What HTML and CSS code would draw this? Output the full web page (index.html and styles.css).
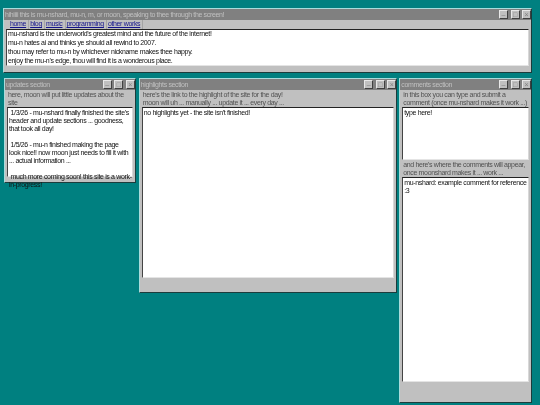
FILE: index.html
```html
<!DOCTYPE html>
<html lang="en">
<head>
    <meta charset="UTF-8">
    <meta name="viewport" content="width=device-width, initial-scale=1.0">
    <title>moon</title>
    <link rel="stylesheet" href="styles.css">
</head>
<body>
    <div class="window top">
        <div class="titlebar">
            <span class="title">hihiiii this is mu-nshard, mu-n, m, or moon, speaking to thee through the screen!</span>
            <div class="controls">
                <span class="ctl">&#8211;</span>
                <span class="ctl">&#9633;</span>
                <span class="ctl">&#215;</span>
            </div>
        </div>
        <div class="nav">
            <a href="#">home</a>
            <a href="#">blog</a>
            <a href="#">music</a>
            <a href="#">programming</a>
            <a href="#">other works</a>
        </div>
        <div class="box intro">
            mu-nshard is the underworld's greatest mind and the future of the internet!<br>
            mu-n hates ai and thinks ye should all rewind to 2007.<br>
            thou may refer to mu-n by whichever nickname makes thee happy.<br>
            enjoy the mu-n's edge, thou will find it is a wonderous place.
        </div>
    </div>

    <div class="row">
        <div class="window updates">
            <div class="titlebar">
                <span class="title">updates section</span>
                <div class="controls">
                    <span class="ctl">&#8211;</span>
                    <span class="ctl">&#9633;</span>
                    <span class="ctl">&#215;</span>
                </div>
            </div>
            <p class="desc">here, moon will put little updates about the site</p>
            <div class="box updates-box">
                <p>1/3/26 - mu-nshard finally finished the site's header and update sections ... goodness, that took all day!</p>
                <p>1/5/26 - mu-n finished making the page<br>look nice!! now moon just needs to fill it with ... actual information ...</p>
                <p>much more coming soon! this site is a work-in-progress!</p>
            </div>
        </div>

        <div class="window highlights">
            <div class="titlebar">
                <span class="title">highlights section</span>
                <div class="controls">
                    <span class="ctl">&#8211;</span>
                    <span class="ctl">&#9633;</span>
                    <span class="ctl">&#215;</span>
                </div>
            </div>
            <p class="desc">here's the link to the highlight of the site for the day!<br>moon will uh ... manually ... update it ... every day ...</p>
            <div class="box highlights-box">no highlights yet - the site isn't finished!</div>
        </div>

        <div class="window comments">
            <div class="titlebar">
                <span class="title">comments section</span>
                <div class="controls">
                    <span class="ctl">&#8211;</span>
                    <span class="ctl">&#9633;</span>
                    <span class="ctl">&#215;</span>
                </div>
            </div>
            <p class="desc">in this box you can type and submit a comment (once mu-nshard makes it work ...)</p>
            <div class="box type-box">type here!</div>
            <p class="desc">and here's where the comments will appear, once moonshard makes it ... work ...</p>
            <div class="box list-box">mu-nshard: example comment for reference :3</div>
        </div>
    </div>
</body>
</html>
```

FILE: styles.css
```css
* {
    box-sizing: border-box;
}
body {
    margin: 0;
    padding: 8px 8px 0 3px;
    background: #008080;
    font-family: "Liberation Sans", Arial, sans-serif;
    font-size: 7px;
    letter-spacing: -0.35px;
    line-height: 8px;
    color: #111;
    height: 405px;
    overflow: hidden;
    filter: blur(0.3px);
}
p {
    margin: 0;
}
.window {
    display: flex;
    flex-direction: column;
    background: #c0c0c0;
    border-top: 1px solid #a8dcdc;
    border-left: 1px solid #a8dcdc;
    border-right: 1px solid #1c3c3c;
    border-bottom: 1px solid #1c3c3c;
}
.top {
    width: 529px;
    height: 65px;
}
.row {
    display: flex;
    align-items: flex-start;
    margin: 5px 0 0 1px;
    gap: 3px;
}
.updates {
    width: 132px;
    height: 105px;
}
.highlights {
    width: 259px;
    height: 215px;
}
.comments {
    width: 133px;
    height: 325px;
    margin-left: -1px;
}
.titlebar {
    display: flex;
    justify-content: space-between;
    align-items: center;
    height: 11px;
    flex-shrink: 0;
    background: #808080;
    padding-left: 1px;
}
.title {
    color: #c0c0c0;
    white-space: nowrap;
}
.controls {
    display: flex;
    gap: 2.5px;
}
.ctl {
    width: 9px;
    height: 9px;
    background: #c0c0c0;
    color: #808080;
    font-size: 7px;
    line-height: 7px;
    letter-spacing: 0;
    text-align: center;
    border-top: 1px solid #e8e8e8;
    border-left: 1px solid #e8e8e8;
    border-right: 1px solid #404040;
    border-bottom: 1px solid #404040;
}
.nav {
    display: flex;
    height: 9px;
    padding-left: 5px;
    flex-shrink: 0;
}
.nav a {
    color: #14148c;
    padding: 0 2px 0 1px;
    border-right: 1px solid #a4a4a4;
}
.box {
    background: #fff;
    border-top: 1px solid #222;
    border-left: 1px solid #444;
    border-right: 1px solid #d8d8d8;
    border-bottom: 1px solid #e4e4e4;
    margin: 0 2px;
    padding: 1px 0 0 1px;
}
.intro {
    height: 37px;
    line-height: 8.9px;
    padding-top: 0;
}
.desc {
    color: #505050;
    padding: 1px 3px 0 3px;
    height: 17px;
    flex-shrink: 0;
}
.updates-box {
    height: 70px;
}
.updates-box p {
    margin-bottom: 8px;
    text-indent: 1.5px;
}
.highlights-box {
    height: 171px;
}
.type-box {
    height: 53px;
}
.list-box {
    height: 205px;
}
```
